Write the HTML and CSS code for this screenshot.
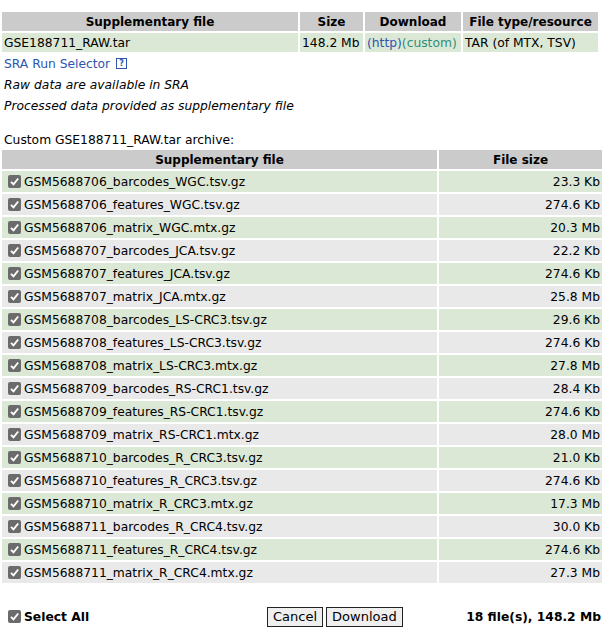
FILE: index.html
```html
<!DOCTYPE html>
<html lang="en">
<head>
  <meta charset="UTF-8" />
  <title>GSE188711 supplementary files</title>
  <link rel="stylesheet" href="styles.css">
</head>
<body>

  <!-- Supplementary file summary -->
  <table class="supp">
    <tr>
      <th class="c-name">Supplementary file</th>
      <th class="c-size">Size</th>
      <th class="c-dl">Download</th>
      <th class="c-type">File type/resource</th>
    </tr>
    <tr>
      <td>GSE188711_RAW.tar</td>
      <td>148.2 Mb</td>
      <td><a href="#" class="link">(http)</a><a href="#" class="custom">(custom)</a></td>
      <td>TAR (of MTX, TSV)</td>
    </tr>
  </table>

  <div class="notes">
    <div><a href="#" class="link">SRA Run Selector</a> <span class="help">?</span></div>
    <div><i>Raw data are available in SRA</i></div>
    <div><i>Processed data provided as supplementary file</i></div>
  </div>

  <div class="archive-title">Custom GSE188711_RAW.tar archive:</div>

  <table class="files" id="files">
    <tr>
      <th class="f-name">Supplementary file</th>
      <th class="f-size">File size</th>
    </tr>
  </table>

  <div class="actions">
    <label class="select-all"><span class="check"></span>Select All</label>
    <div class="buttons">
      <button>Cancel</button>
      <button>Download</button>
    </div>
    <div class="total">18 file(s), 148.2 Mb</div>
  </div>

  <script>
    const files = [
      ['GSM5688706_barcodes_WGC.tsv.gz', '23.3 Kb'],
      ['GSM5688706_features_WGC.tsv.gz', '274.6 Kb'],
      ['GSM5688706_matrix_WGC.mtx.gz', '20.3 Mb'],
      ['GSM5688707_barcodes_JCA.tsv.gz', '22.2 Kb'],
      ['GSM5688707_features_JCA.tsv.gz', '274.6 Kb'],
      ['GSM5688707_matrix_JCA.mtx.gz', '25.8 Mb'],
      ['GSM5688708_barcodes_LS-CRC3.tsv.gz', '29.6 Kb'],
      ['GSM5688708_features_LS-CRC3.tsv.gz', '274.6 Kb'],
      ['GSM5688708_matrix_LS-CRC3.mtx.gz', '27.8 Mb'],
      ['GSM5688709_barcodes_RS-CRC1.tsv.gz', '28.4 Kb'],
      ['GSM5688709_features_RS-CRC1.tsv.gz', '274.6 Kb'],
      ['GSM5688709_matrix_RS-CRC1.mtx.gz', '28.0 Mb'],
      ['GSM5688710_barcodes_R_CRC3.tsv.gz', '21.0 Kb'],
      ['GSM5688710_features_R_CRC3.tsv.gz', '274.6 Kb'],
      ['GSM5688710_matrix_R_CRC3.mtx.gz', '17.3 Mb'],
      ['GSM5688711_barcodes_R_CRC4.tsv.gz', '30.0 Kb'],
      ['GSM5688711_features_R_CRC4.tsv.gz', '274.6 Kb'],
      ['GSM5688711_matrix_R_CRC4.mtx.gz', '27.3 Mb']
    ];

    const table = document.getElementById('files');
    files.forEach((f, i) => {
      const tr = document.createElement('tr');
      tr.className = i % 2 === 0 ? 'odd' : 'even';
      tr.innerHTML = '<td><span class="check"></span>' + f[0] + '</td><td class="size">' + f[1] + '</td>';
      table.appendChild(tr);
    });
  </script>

</body>
</html>
```

FILE: styles.css
```css
body {
  font-family: "DejaVu Sans", Verdana, sans-serif;
  font-size: 12.3px;
  color: #000;
  margin: 0;
  background: #fff;
}

table {
  border-spacing: 2px;
}

th {
  background-color: #cbcbcb;
  font-weight: bold;
  font-size: 12px;
  height: 19px;
  padding: 0 3px;
  white-space: nowrap;
}

td {
  padding: 0 2px;
  white-space: nowrap;
}

a {
  text-decoration: none;
}

.link {
  color: #2d56b0;
}

.custom {
  color: #2f8f7c;
}

/* top table */
.supp {
  margin-top: 10px;
}

.supp td {
  background-color: #dce8d6;
  height: 19px;
}

.c-name { width: 290px; }
.c-size { width: 57px; }
.c-dl { width: 90px; }
.c-type { width: 129px; }

.notes {
  padding-left: 4px;
  line-height: 21px;
}

.help {
  display: inline-block;
  width: 9px;
  height: 9px;
  border: 1px solid #2d56b0;
  color: #2d56b0;
  font-size: 8px;
  line-height: 9px;
  text-align: center;
  font-weight: bold;
  vertical-align: 2px;
  margin-left: 2px;
}

.archive-title {
  padding-left: 4px;
  margin-top: 16px;
  line-height: 15px;
}

/* file list */
.files {
  width: 604px;
}

.f-name { width: 429px; }

.files td {
  height: 21px;
}

.files tr.odd td {
  background-color: #dce8d6;
}

.files tr.even td {
  background-color: #e9e9e9;
}

.files td.size {
  text-align: right;
  padding-right: 2px;
}

.check {
  display: inline-block;
  width: 13px;
  height: 13px;
  border-radius: 2px;
  background: #6b6b6b url("data:image/svg+xml;utf8,<svg xmlns='http://www.w3.org/2000/svg' viewBox='0 0 13 13'><path d='M3 6.8 L5.5 9.3 L10.2 3.5' fill='none' stroke='white' stroke-width='1.9'/></svg>") no-repeat center;
  vertical-align: -2px;
  margin: 0 3px 0 4px;
}

/* bottom bar */
.actions {
  display: flex;
  align-items: center;
  margin-top: 22px;
  padding: 0 11px 0 4px;
}

.select-all {
  font-weight: bold;
  width: 263px;
}

.buttons {
  display: flex;
  gap: 3px;
}

button {
  font-family: "DejaVu Sans", Verdana, sans-serif;
  font-size: 13px;
  background: #efefef;
  border: 1px solid #222;
  padding: 1px 5px;
  height: 20px;
  line-height: 16px;
}

.total {
  margin-left: auto;
  font-weight: bold;
}
```
